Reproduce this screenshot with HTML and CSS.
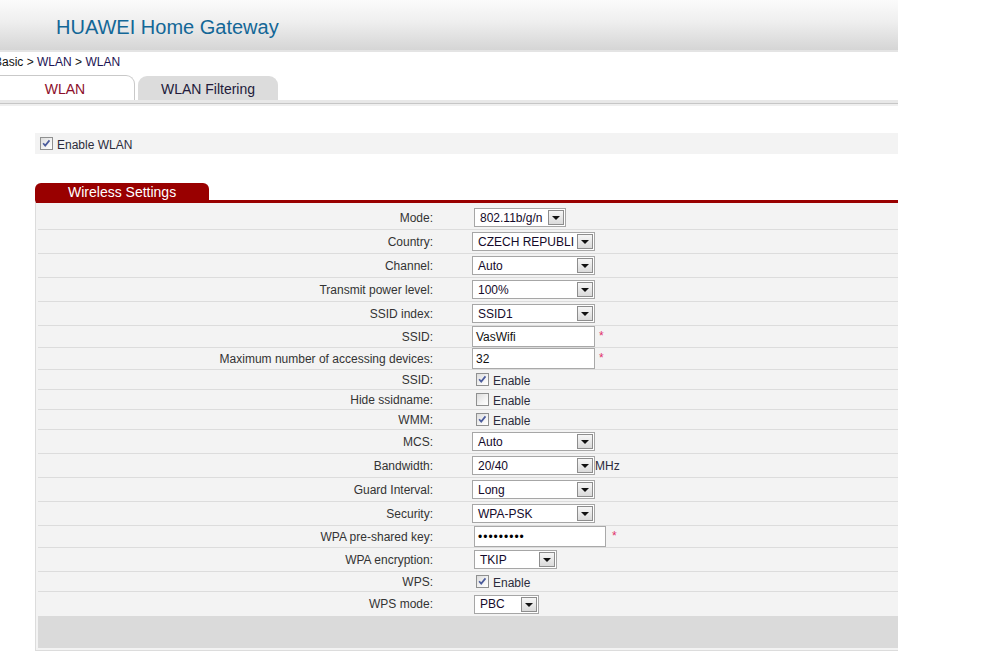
FILE: index.html
```html
<!DOCTYPE html>
<html>
<head>
<meta charset="utf-8">
<title>HUAWEI Home Gateway</title>
<link rel="stylesheet" href="styles.css">
</head>
<body>
<div class="page">
  <header class="top"><h1 class="brand">HUAWEI Home Gateway</h1></header>
  <div class="crumb">Basic &gt; <span class="lnk">WLAN</span> &gt; <span class="lnk">WLAN</span></div>
  <div class="tabs">
    <div class="tab tab-active">WLAN</div>
    <div class="tab tab-idle">WLAN Filtering</div>
  </div>
  <div class="tabline"></div>

  <div class="content">
    <div class="enable-bar">
      <span class="cb"><svg viewBox="0 0 13 13" width="11" height="11"><path d="M2.5 6.2 L5 9 L10 2.8" fill="none" stroke="#4b5c9c" stroke-width="2"/></svg></span>
      <span class="cb-text">Enable WLAN</span>
    </div>

    <div class="ptitle"><span class="ptab">Wireless Settings</span></div>
    <div class="panel">
      <div class="row r-sel"><div class="lbl">Mode:</div><div class="val"><span class="sel w-mode"><span class="sv">802.11b/g/n</span><span class="sa"></span></span></div></div>
      <div class="row r-sel"><div class="lbl">Country:</div><div class="val v-l"><span class="sel w-std"><span class="sv">CZECH REPUBLI</span><span class="sa"></span></span></div></div>
      <div class="row r-sel"><div class="lbl">Channel:</div><div class="val v-l"><span class="sel w-std"><span class="sv">Auto</span><span class="sa"></span></span></div></div>
      <div class="row r-sel"><div class="lbl">Transmit power level:</div><div class="val v-l"><span class="sel w-std"><span class="sv">100%</span><span class="sa"></span></span></div></div>
      <div class="row r-sel"><div class="lbl">SSID index:</div><div class="val v-l"><span class="sel w-std"><span class="sv">SSID1</span><span class="sa"></span></span></div></div>
      <div class="row r-inp"><div class="lbl">SSID:</div><div class="val v-l"><span class="inp w-std">VasWifi</span><span class="req">*</span></div></div>
      <div class="row r-inp"><div class="lbl">Maximum number of accessing devices:</div><div class="val v-l"><span class="inp w-std">32</span><span class="req">*</span></div></div>
      <div class="row r-cb"><div class="lbl">SSID:</div><div class="val v-cb"><span class="cb"><svg viewBox="0 0 13 13" width="11" height="11"><path d="M2.5 6.2 L5 9 L10 2.8" fill="none" stroke="#4b5c9c" stroke-width="2"/></svg></span><span class="cb-text">Enable</span></div></div>
      <div class="row r-cb"><div class="lbl">Hide ssidname:</div><div class="val v-cb"><span class="cb"></span><span class="cb-text">Enable</span></div></div>
      <div class="row r-cb"><div class="lbl">WMM:</div><div class="val v-cb"><span class="cb"><svg viewBox="0 0 13 13" width="11" height="11"><path d="M2.5 6.2 L5 9 L10 2.8" fill="none" stroke="#4b5c9c" stroke-width="2"/></svg></span><span class="cb-text">Enable</span></div></div>
      <div class="row r-sel"><div class="lbl">MCS:</div><div class="val v-l"><span class="sel w-std"><span class="sv">Auto</span><span class="sa"></span></span></div></div>
      <div class="row r-sel"><div class="lbl">Bandwidth:</div><div class="val v-l"><span class="sel w-std"><span class="sv">20/40</span><span class="sa"></span></span><span class="unit">MHz</span></div></div>
      <div class="row r-sel"><div class="lbl">Guard Interval:</div><div class="val v-l"><span class="sel w-std"><span class="sv">Long</span><span class="sa"></span></span></div></div>
      <div class="row r-sel"><div class="lbl">Security:</div><div class="val v-l"><span class="sel w-std"><span class="sv">WPA-PSK</span><span class="sa"></span></span></div></div>
      <div class="row r-inp"><div class="lbl">WPA pre-shared key:</div><div class="val"><span class="inp w-key pw">&#8226;&#8226;&#8226;&#8226;&#8226;&#8226;&#8226;&#8226;&#8226;</span><span class="req req-key">*</span></div></div>
      <div class="row r-sel"><div class="lbl">WPA encryption:</div><div class="val"><span class="sel w-enc"><span class="sv">TKIP</span><span class="sa"></span></span></div></div>
      <div class="row r-cb"><div class="lbl">WPS:</div><div class="val v-cb"><span class="cb"><svg viewBox="0 0 13 13" width="11" height="11"><path d="M2.5 6.2 L5 9 L10 2.8" fill="none" stroke="#4b5c9c" stroke-width="2"/></svg></span><span class="cb-text">Enable</span></div></div>
      <div class="row r-sel r-last"><div class="lbl">WPS mode:</div><div class="val"><span class="sel w-wps"><span class="sv">PBC</span><span class="sa"></span></span></div></div>
      <div class="pfoot"></div>
    </div>
  </div>
</div>
</body>
</html>
```

FILE: styles.css
```css
html, body {
  margin: 0;
  padding: 0;
  background: #fff;
}
body {
  font-family: "Liberation Sans", Arial, sans-serif;
  font-size: 12px;
  color: #333;
}
.page {
  width: 898px;
  overflow: hidden;
}
.top {
  height: 50px;
  background: linear-gradient(#fbfbfb 0%, #eeeeee 45%, #d5d5d5 100%);
  border-bottom: 2px solid #e4e4e4;
}
.brand {
  margin: 0;
  padding-left: 56px;
  font-weight: normal;
  font-size: 20px;
  line-height: 54px;
  color: #136797;
}
.crumb {
  height: 23px;
  line-height: 21px;
  margin-left: -6px;
  color: #111;
  font-size: 12px;
}
.lnk {
  color: #1c1454;
}
.tabs {
  display: flex;
  height: 25px;
  align-items: flex-end;
}
.tab {
  box-sizing: border-box;
  font-size: 14px;
  text-align: center;
}
.tab-active {
  width: 135px;
  height: 25px;
  line-height: 26px;
  background: #fff;
  border: 1px solid #c9c9c9;
  border-left: 0;
  border-bottom: 0;
  border-top-right-radius: 9px;
  color: #8c0d2a;
  padding-right: 4px;
}
.tab-idle {
  width: 140px;
  height: 24px;
  line-height: 26px;
  margin-left: 3px;
  background: #dcdcdc;
  border-top-left-radius: 9px;
  border-top-right-radius: 9px;
  color: #221a3a;
}
.tabline {
  height: 3px;
  background: #e8e8e8;
  border-bottom: 1px solid #c6c6c6;
  margin-bottom: 2px;
  box-shadow: 0 2px 0 #efefef;
}
.content {
  padding: 27px 0 0 35px;
}
.enable-bar {
  height: 21px;
  background: #f3f3f3;
  display: flex;
  align-items: center;
  padding-left: 5px;
}
.cb {
  box-sizing: border-box;
  width: 13px;
  height: 13px;
  border: 1px solid #8f9090;
  background: linear-gradient(135deg, #dcdcdc 0%, #f4f4f4 60%, #ffffff 100%);
  display: inline-flex;
  align-items: center;
  justify-content: center;
  flex: none;
}
.cb-text {
  margin-left: 4px;
  color: #2c2c3c;
  font-size: 12px;
  position: relative;
  top: 1px;
}
.ptitle {
  margin-top: 29px;
  height: 17px;
  display: flex;
}
.ptab {
  width: 174px;
  box-sizing: border-box;
  background: #990000;
  color: #fff;
  font-size: 14px;
  line-height: 18px;
  padding-left: 33px;
  border-top-left-radius: 6px;
  border-top-right-radius: 6px;
}
.panel {
  border-top: 3px solid #990000;
  border-left: 1px solid #dcdcdc;
  border-bottom: 1px solid #dcdcdc;
  background: #f3f3f3;
  padding: 3px 0 2px 2px;
}
.row {
  display: grid;
  grid-template-columns: 398px 1fr;
  align-items: center;
  border-bottom: 1px solid #dcdcdc;
}
.r-sel { height: 23px; }
.r-inp { height: 21px; }
.r-cb { height: 19px; }
.r-last { border-bottom: 0; height: 24px; }
.lbl {
  text-align: right;
  padding-right: 3px;
  color: #333;
  white-space: nowrap;
}
.val {
  display: flex;
  align-items: center;
  padding-left: 38px;
}
.val.v-l { padding-left: 36px; }
.val.v-cb { padding-left: 40px; }
.sel {
  box-sizing: border-box;
  display: inline-flex;
  align-items: center;
  height: 19px;
  border: 1px solid #a6a6a6;
  background: #fff;
  padding: 1px;
}
.sv {
  flex: 1;
  padding-left: 4px;
  color: #140a2a;
  font-size: 12px;
  white-space: nowrap;
  overflow: hidden;
}
.sa {
  box-sizing: border-box;
  width: 16px;
  height: 15px;
  flex: none;
  border: 1px solid #8d8d8d;
  background: linear-gradient(#f6f6f6, #dadada);
  display: flex;
  align-items: center;
  justify-content: center;
}
.sa::after {
  content: "";
  width: 0;
  height: 0;
  border-left: 4px solid transparent;
  border-right: 4px solid transparent;
  border-top: 4px solid #111;
  margin-top: 1px;
}
.w-mode { width: 92px; }
.w-std { width: 123px; }
.w-enc { width: 83px; }
.w-wps { width: 65px; }
.inp {
  box-sizing: border-box;
  display: inline-flex;
  align-items: center;
  height: 21px;
  border: 1px solid #a9a9a9;
  background: #fff;
  padding-left: 3px;
  color: #111;
  font-size: 12px;
}
.w-key { width: 132px; }
.pw {
  font-size: 12px;
  letter-spacing: 1px;
  color: #000;
}
.req {
  color: #e0306a;
  font-size: 12px;
  margin-left: 4px;
  position: relative;
  top: -1px;
}
.req-key { margin-left: 6px; }
.unit {
  color: #2c2c3c;
  font-size: 12px;
}
.pfoot {
  height: 32px;
  background: #dadada;
}
```
